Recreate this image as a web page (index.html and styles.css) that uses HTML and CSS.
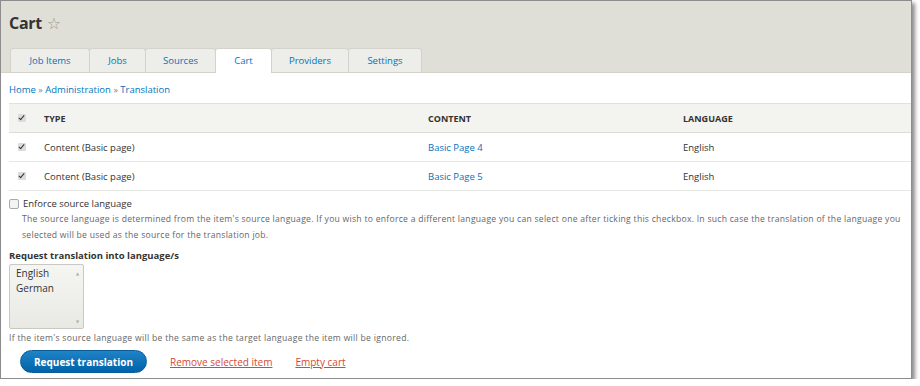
FILE: index.html
```html
<!DOCTYPE html>
<html lang="en">
<head>
    <meta charset="UTF-8">
    <meta name="viewport" content="width=device-width, initial-scale=1.0">
    <title>Cart</title>
    <link rel="stylesheet" href="styles.css">
</head>
<body>
    <div class="frame">
        <div class="header">
            <h1>Cart <span class="star">&#9734;</span></h1>
            <ul class="tabs">
                <li class="tab t-items">Job Items</li>
                <li class="tab t-jobs">Jobs</li>
                <li class="tab t-sources">Sources</li>
                <li class="tab t-cart active">Cart</li>
                <li class="tab t-providers">Providers</li>
                <li class="tab t-settings">Settings</li>
            </ul>
        </div>

        <div class="content">
            <div class="breadcrumb">
                <a href="#">Home</a> <span class="sep">&raquo;</span> <a href="#">Administration</a> <span class="sep">&raquo;</span> <a href="#">Translation</a>
            </div>

            <table class="cart-table">
                <thead>
                    <tr>
                        <th class="col-check"><span class="check"></span></th>
                        <th class="col-type">Type</th>
                        <th class="col-content">Content</th>
                        <th>Language</th>
                    </tr>
                </thead>
                <tbody>
                    <tr>
                        <td class="col-check"><span class="check"></span></td>
                        <td>Content (Basic page)</td>
                        <td><a href="#">Basic Page 4</a></td>
                        <td>English</td>
                    </tr>
                    <tr>
                        <td class="col-check"><span class="check"></span></td>
                        <td>Content (Basic page)</td>
                        <td><a href="#">Basic Page 5</a></td>
                        <td>English</td>
                    </tr>
                </tbody>
            </table>

            <div class="enforce">
                <span class="box"></span> Enforce source language
            </div>
            <div class="description">
                The source language is determined from the item's source language. If you wish to enforce a different language you can select one after ticking this checkbox. In such case the translation of the language you selected will be used as the source for the translation job.
            </div>

            <div class="field-label">Request translation into language/s</div>
            <div class="listbox">
                <div class="options">
                    <div>English</div>
                    <div>German</div>
                </div>
                <div class="scroll">
                    <span>&#9650;</span>
                    <span>&#9660;</span>
                </div>
            </div>
            <div class="note">If the item's source language will be the same as the target language the item will be ignored.</div>

            <div class="actions">
                <button class="primary">Request translation</button>
                <a href="#" class="danger">Remove selected item</a>
                <a href="#" class="danger">Empty cart</a>
            </div>
        </div>
    </div>
</body>
</html>
```

FILE: styles.css
```css
body {
    margin: 0;
    font-family: "Open Sans", "DejaVu Sans", sans-serif;
    background-color: #fff;
    color: #333;
}
a {
    color: #0074bd;
    text-decoration: none;
}
.frame {
    width: 910px;
    height: 377px;
    border: 1px solid #8c8c8c;
    box-shadow: 3px 3px 4px rgba(0, 0, 0, 0.45);
    background-color: #fff;
    overflow: hidden;
}
.header {
    background-color: #e0dfd7;
    height: 71px;
    display: flex;
    flex-direction: column;
    justify-content: space-between;
    border-bottom: 1px solid #d4d3cb;
}
.header h1 {
    margin: 0;
    padding: 10px 0 0 8px;
    font-size: 16px;
    font-weight: bold;
    color: #333;
    line-height: 24px;
    letter-spacing: -0.3px;
}
.star {
    font-weight: normal;
    font-size: 16px;
    color: #9a9a94;
    margin-left: 1px;
}
.tabs {
    list-style: none;
    margin: 0 0 -1px 9px;
    padding: 0;
    display: flex;
}
.tab {
    height: 23px;
    line-height: 24px;
    text-align: center;
    font-size: 9.5px;
    color: #0074bd;
    background-color: #edede9;
    border: 1px solid #d4d3cb;
    border-bottom: none;
    border-radius: 3px 3px 0 0;
    margin-right: -1px;
}
.tab.active {
    background-color: #fff;
    height: 24px;
    position: relative;
}
.t-items { width: 78px; }
.t-jobs { width: 55px; }
.t-sources { width: 69px; }
.t-cart { width: 55px; }
.t-providers { width: 76px; }
.t-settings { width: 72px; }

.content {
    padding: 0 0 0 8px;
}
.breadcrumb {
    font-size: 9.5px;
    height: 30px;
    line-height: 34px;
}
.breadcrumb .sep {
    color: #888;
    font-size: 9px;
}
.cart-table {
    width: 100%;
    border-collapse: collapse;
    font-size: 9.5px;
    border-top: 1px solid #e0e0dc;
}
.cart-table th {
    background-color: #f3f3ef;
    text-transform: uppercase;
    text-align: left;
    font-weight: bold;
    font-size: 9px;
    color: #333;
    height: 28px;
    border-bottom: 1px solid #dcdcd6;
    padding: 0;
}
.cart-table td {
    height: 28px;
    border-bottom: 1px solid #e6e6e3;
    padding: 0;
    color: #333;
}
.cart-table .col-check {
    width: 26px;
    padding-left: 9px;
}
.cart-table .col-type {
    width: 384px;
}
.cart-table .col-content {
    width: 255px;
}
.check {
    display: inline-block;
    width: 8px;
    height: 8px;
    background-color: #dcdcdc;
    border-radius: 1px;
    position: relative;
    top: -1px;
    vertical-align: middle;
}
.check::after {
    content: "";
    position: absolute;
    left: 2px;
    top: 0px;
    width: 2px;
    height: 5px;
    border: solid #333;
    border-width: 0 1.5px 1.5px 0;
    transform: rotate(40deg);
}
.enforce {
    font-size: 9.5px;
    margin-top: 6px;
    display: flex;
    align-items: center;
    gap: 4px;
    color: #333;
}
.box {
    display: inline-block;
    width: 8px;
    height: 8px;
    border: 1px solid #aaa;
    border-radius: 2px;
    background-color: #f3f3f3;
}
.description {
    font-size: 8.6px;
    color: #666;
    line-height: 16px;
    padding-left: 13px;
    margin-top: 1px;
    letter-spacing: 0.27px;
}
.field-label {
    font-size: 9.5px;
    font-weight: bold;
    margin-top: 6px;
    color: #333;
}
.listbox {
    margin-top: 2px;
    border: 1px solid #c8c8c4;
    border-radius: 2px;
    background: linear-gradient(#f5f5f2, #e9e9e4);
    display: flex;
    justify-content: space-between;
    box-sizing: border-box;
    width: 75px;
    height: 65px;
}
.options {
    font-size: 10px;
    line-height: 15px;
    padding: 1px 0 0 6px;
    color: #333;
}
.scroll {
    display: flex;
    flex-direction: column;
    justify-content: space-between;
    font-size: 4px;
    color: #aaa;
    padding: 6px 4px 4px 0;
}
.note {
    font-size: 8.6px;
    color: #666;
    margin-top: 3px;
    letter-spacing: 0.3px;
}
.actions {
    display: flex;
    align-items: center;
    margin-top: 6px;
    padding-left: 11px;
    gap: 23px;
}
.primary {
    background: linear-gradient(#1f83c6, #0062a8);
    color: #fff;
    font-family: "Open Sans", "DejaVu Sans", sans-serif;
    font-weight: bold;
    font-size: 10px;
    border: 1px solid #0a5d99;
    border-radius: 12px;
    width: 127px;
    height: 23px;
    padding: 0;
    cursor: pointer;
}
.danger {
    color: #d24a36;
    text-decoration: underline;
    font-size: 10px;
}
```
